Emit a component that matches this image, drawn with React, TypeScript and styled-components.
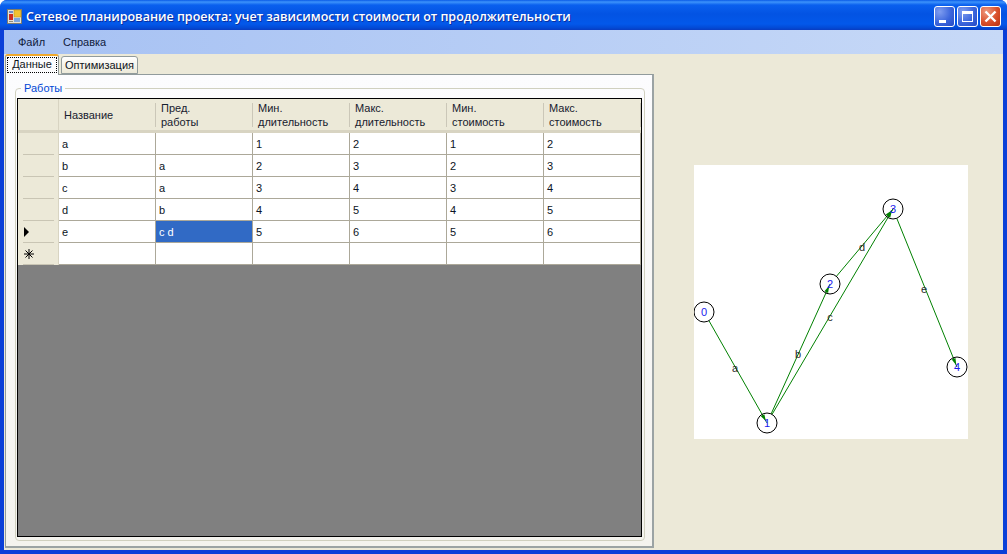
import React from 'react';
import styled, { createGlobalStyle } from 'styled-components';

const GlobalStyle = createGlobalStyle`
  html, body {
    margin: 0;
    padding: 0;
    background: #fff;
  }
  * {
    box-sizing: border-box;
  }
`;

const Window = styled.div`
  width: 1007px;
  height: 554px;
  display: flex;
  flex-direction: column;
  overflow: hidden;
  background: #0a3fd8;
  border-radius: 7px 7px 0 0;
  font-family: 'Liberation Sans', Arial, sans-serif;
  font-size: 11px;
  color: #000;
`;

const TitleBar = styled.div`
  height: 30px;
  flex: none;
  display: flex;
  align-items: center;
  padding: 3px 6px 0 7px;
  background: linear-gradient(180deg, #0a5ae6 0, #3d93fb 2px, #0a60ee 5px, #0353e3 14px, #0358ea 24px, #0349d4 28px, #0a3cc0 30px);
`;

const TitleText = styled.div`
  flex: 1;
  margin-left: 4px;
  color: #fff;
  font-family: 'Open Sans', 'Liberation Sans', sans-serif;
  font-weight: 600;
  font-size: 12.5px;
  white-space: nowrap;
  text-shadow: 1px 1px 0 #0b2f9e;
`;

const CaptionButton = styled.div<{ $close?: boolean }>`
  width: 21px;
  height: 21px;
  margin-left: 2px;
  border: 1px solid #fff;
  border-radius: 3px;
  background: ${(p) =>
    p.$close
      ? 'radial-gradient(circle at 30% 25%, #ee9a80, #d9502c 55%, #b8300e)'
      : 'radial-gradient(circle at 25% 25%, #7f9df0, #3c66dc 55%, #2449c4)'};
  display: flex;
  align-items: center;
  justify-content: center;
`;

const Frame = styled.div`
  flex: 1;
  min-height: 0;
  display: flex;
  flex-direction: column;
  margin: 0 4px 4px;
  background: #ece9d8;
`;

const MenuBar = styled.div`
  height: 24px;
  flex: none;
  display: flex;
  align-items: center;
  padding: 0 7px;
  background: linear-gradient(90deg, #a6c1f3, #c7d9f7);
`;

const MenuItem = styled.div`
  padding: 0 7px;
  margin-right: 4px;
  font-size: 11px;
  color: #10203c;
`;

const Content = styled.div`
  flex: 1;
  min-height: 0;
  display: flex;
`;

const TabArea = styled.div`
  width: 650px;
  flex: none;
  display: flex;
  flex-direction: column;
  padding: 0 0 2px 1px;
`;

const TabStrip = styled.div`
  height: 20px;
  flex: none;
  display: flex;
  align-items: flex-end;
  position: relative;
  z-index: 1;
`;

const Tab = styled.div<{ $active?: boolean }>`
  height: ${(p) => (p.$active ? '21px' : '18px')};
  margin-bottom: ${(p) => (p.$active ? '-1px' : '0')};
  width: ${(p) => (p.$active ? '54px' : '77px')};
  margin-right: 2px;
  border: 1px solid #919b9c;
  border-bottom: ${(p) => (p.$active ? 'none' : '1px solid #919b9c')};
  border-top: ${(p) => (p.$active ? '2px solid #f0a92d' : '1px solid #919b9c')};
  border-radius: 3px 3px 0 0;
  background: ${(p) => (p.$active ? '#fcfcfe' : 'linear-gradient(180deg, #fff, #ece9d8)')};
  display: flex;
  align-items: center;
  justify-content: center;
  padding: ${(p) => (p.$active ? '1px 1px 2px' : '0')};
  color: #10141c;
`;

const FocusBox = styled.span`
  flex: 1;
  align-self: stretch;
  display: flex;
  align-items: center;
  justify-content: center;
  padding-bottom: 2px;
  outline: 1px dotted #000;
  outline-offset: -1px;
`;

const TabPage = styled.div`
  flex: 1;
  min-height: 0;
  display: flex;
  padding: 7px 7px 5px 9px;
  border: 1px solid #919b9c;
  border-right: 2px solid #9ba3a4;
  border-bottom: 2px solid #9ba3a4;
  background: linear-gradient(180deg, #fcfcfe, #f4f3ee);
`;

const GroupBox = styled.fieldset`
  flex: 1;
  min-width: 0;
  margin: 0;
  padding: 0 2px 3px 1px;
  border: 1px solid #d0d0bf;
  border-radius: 4px;
  display: flex;
`;

const Legend = styled.legend`
  margin-left: 4px;
  padding: 0 3px;
  font-size: 11px;
  line-height: 13px;
  color: #0046d5;
`;

const GridView = styled.div`
  flex: 1;
  min-width: 0;
  border: 1px solid #000;
  background: #808080;
  margin-top: 3px;
  display: flex;
  flex-direction: column;
`;

const GridRow = styled.div`
  display: grid;
  grid-template-columns: 41px repeat(6, 97px);
  flex: none;
`;

const HeaderCell = styled.div`
  height: 34px;
  padding: 0 0 0 5px;
  background: #ece9d8;
  border-bottom: 3px solid #d8d4c2;
  display: flex;
  align-items: center;
  line-height: 14px;
  color: #17202e;
  white-space: pre-line;
  position: relative;
  &::after {
    content: '';
    position: absolute;
    left: 96px;
    top: 4px;
    bottom: 3px;
    width: 1px;
    background: #cbc7b8;
  }
`;

const CornerCell = styled(HeaderCell)`
  padding: 0;
  &::after {
    left: 40px;
    top: 0;
    bottom: -3px;
    background: #d8d4c2;
  }
`;

const RowHeaderCell = styled.div`
  height: 22px;
  background: #ece9d8;
  border-right: 1px solid #d8d4c2;
  display: flex;
  align-items: center;
  padding-left: 6px;
  position: relative;
  &::after {
    content: '';
    position: absolute;
    left: 5px;
    right: 4px;
    bottom: 0;
    height: 1px;
    background: #c9c5b4;
  }
`;

const Cell = styled.div<{ $selected?: boolean }>`
  height: 22px;
  padding: 0 3px;
  display: flex;
  align-items: center;
  border-right: 1px solid #aca899;
  border-bottom: 1px solid #aca899;
  background: ${(p) => (p.$selected ? '#316ac5' : '#fff')};
  color: ${(p) => (p.$selected ? '#fff' : '#0c1424')};
  font-size: 11px;
`;

const GraphArea = styled.div`
  flex: 1;
  display: flex;
  align-items: flex-start;
  padding: 111px 0 0 40px;
`;

const GraphCanvas = styled.svg`
  display: block;
  flex: none;
  width: 274px;
  height: 274px;
  background: #fff;
`;

const headers = ['Название', 'Пред.\nработы', 'Мин.\nдлительность', 'Макс.\nдлительность', 'Мин.\nстоимость', 'Макс.\nстоимость'];

const rows = [
  ['a', '', '1', '2', '1', '2'],
  ['b', 'a', '2', '3', '2', '3'],
  ['c', 'a', '3', '4', '3', '4'],
  ['d', 'b', '4', '5', '4', '5'],
  ['e', 'c d', '5', '6', '5', '6'],
  ['', '', '', '', '', ''],
];

// node centres in canvas coordinates
const nodes = [
  { x: 10, y: 147 },
  { x: 73, y: 258 },
  { x: 136, y: 119 },
  { x: 199, y: 44 },
  { x: 263, y: 202 },
];

const edges = [
  { from: 0, to: 1, label: 'a', lx: 41, ly: 207 },
  { from: 1, to: 2, label: 'b', lx: 104, ly: 193 },
  { from: 1, to: 3, label: 'c', lx: 136, ly: 156 },
  { from: 2, to: 3, label: 'd', lx: 168, ly: 86 },
  { from: 3, to: 4, label: 'e', lx: 230, ly: 128 },
];

const Graph: React.FC<{}> = () => {
  return (
    <GraphCanvas viewBox="0 0 274 274">
      {edges.map((e) => {
        const a = nodes[e.from];
        const b = nodes[e.to];
        const ang = Math.atan2(b.y - a.y, b.x - a.x);
        const cos = Math.cos(ang);
        const sin = Math.sin(ang);
        const baseX = b.x - cos * 9;
        const baseY = b.y - sin * 9;
        const nx = -sin * 2;
        const ny = cos * 2;
        return (
          <g key={e.label}>
            <line x1={a.x + cos * 10} y1={a.y + sin * 10} x2={b.x} y2={b.y} stroke="#008000" strokeWidth={1} />
            <polygon
              points={`${b.x - cos * 2},${b.y - sin * 2} ${baseX + nx},${baseY + ny} ${baseX - nx},${baseY - ny}`}
              fill="#008000"
            />
          </g>
        );
      })}
      {nodes.map((n, i) => (
        <g key={i}>
          <circle cx={n.x} cy={n.y} r={10} fill="none" stroke="#000" strokeWidth={1} />
          <text x={n.x} y={n.y + 4} textAnchor="middle" fontFamily="Liberation Sans" fontSize={11} fill="#1a1aee">
            {i}
          </text>
        </g>
      ))}
      {edges.map((e) => (
        <text key={e.label} x={e.lx} y={e.ly} textAnchor="middle" fontFamily="Liberation Sans" fontSize={11} fill="#2a2a2a">
          {e.label}
        </text>
      ))}
    </GraphCanvas>
  );
};

const AppIcon: React.FC<{}> = () => (
  <svg width="15" height="15" viewBox="0 0 15 15">
    <rect x="0.5" y="0.5" width="14" height="14" fill="#e4e2d8" stroke="#7a7a70" />
    <rect x="2" y="2" width="4" height="2" fill="#6f8fc8" />
    <rect x="7" y="1" width="7" height="7" fill="#f2c230" stroke="#b08a20" strokeWidth="0.5" />
    <rect x="2" y="5" width="4" height="6" fill="#d02c20" />
    <rect x="7" y="9" width="6" height="4" fill="#7aa6e0" />
    <rect x="2" y="12" width="4" height="1" fill="#8a8a80" />
  </svg>
);

const App: React.FC<{}> = () => {
  return (
    <Window>
      <GlobalStyle />
      <TitleBar>
        <AppIcon />
        <TitleText>Сетевое планирование проекта: учет зависимости стоимости от продолжительности</TitleText>
        <CaptionButton>
          <svg width="19" height="19" viewBox="0 0 19 19">
            <rect x="4" y="13" width="7" height="3" fill="#fff" />
          </svg>
        </CaptionButton>
        <CaptionButton>
          <svg width="19" height="19" viewBox="0 0 19 19">
            <rect x="4.5" y="4.5" width="10" height="10" fill="none" stroke="#fff" />
            <rect x="4" y="4" width="11" height="3" fill="#fff" />
          </svg>
        </CaptionButton>
        <CaptionButton $close>
          <svg width="19" height="19" viewBox="0 0 19 19">
            <path d="M4.5 4.5 L14.5 14.5 M14.5 4.5 L4.5 14.5" stroke="#fff" strokeWidth="2.4" />
          </svg>
        </CaptionButton>
      </TitleBar>
      <Frame>
        <MenuBar>
          <MenuItem>Файл</MenuItem>
          <MenuItem>Справка</MenuItem>
        </MenuBar>
        <Content>
          <TabArea>
            <TabStrip>
              <Tab $active>
                <FocusBox>Данные</FocusBox>
              </Tab>
              <Tab>Оптимизация</Tab>
            </TabStrip>
            <TabPage>
              <GroupBox>
                <Legend>Работы</Legend>
                <GridView>
                  <GridRow>
                    <CornerCell />
                    {headers.map((h) => (
                      <HeaderCell key={h}>{h}</HeaderCell>
                    ))}
                  </GridRow>
                  {rows.map((row, r) => (
                    <GridRow key={r}>
                      <RowHeaderCell>
                        {r === 4 && (
                          <svg width="6" height="10" viewBox="0 0 6 10">
                            <path d="M0 0 L5 5 L0 10 Z" fill="#000" />
                          </svg>
                        )}
                        {r === 5 && (
                          <svg width="10" height="10" viewBox="0 0 10 10">
                            <path d="M5 0 V10 M0 5 H10 M1.5 1.5 L8.5 8.5 M8.5 1.5 L1.5 8.5" stroke="#000" strokeWidth="1" />
                          </svg>
                        )}
                      </RowHeaderCell>
                      {row.map((v, c) => (
                        <Cell key={c} $selected={r === 4 && c === 1}>
                          {v}
                        </Cell>
                      ))}
                    </GridRow>
                  ))}
                </GridView>
              </GroupBox>
            </TabPage>
          </TabArea>
          <GraphArea>
            <Graph />
          </GraphArea>
        </Content>
      </Frame>
    </Window>
  );
};

export default App;
